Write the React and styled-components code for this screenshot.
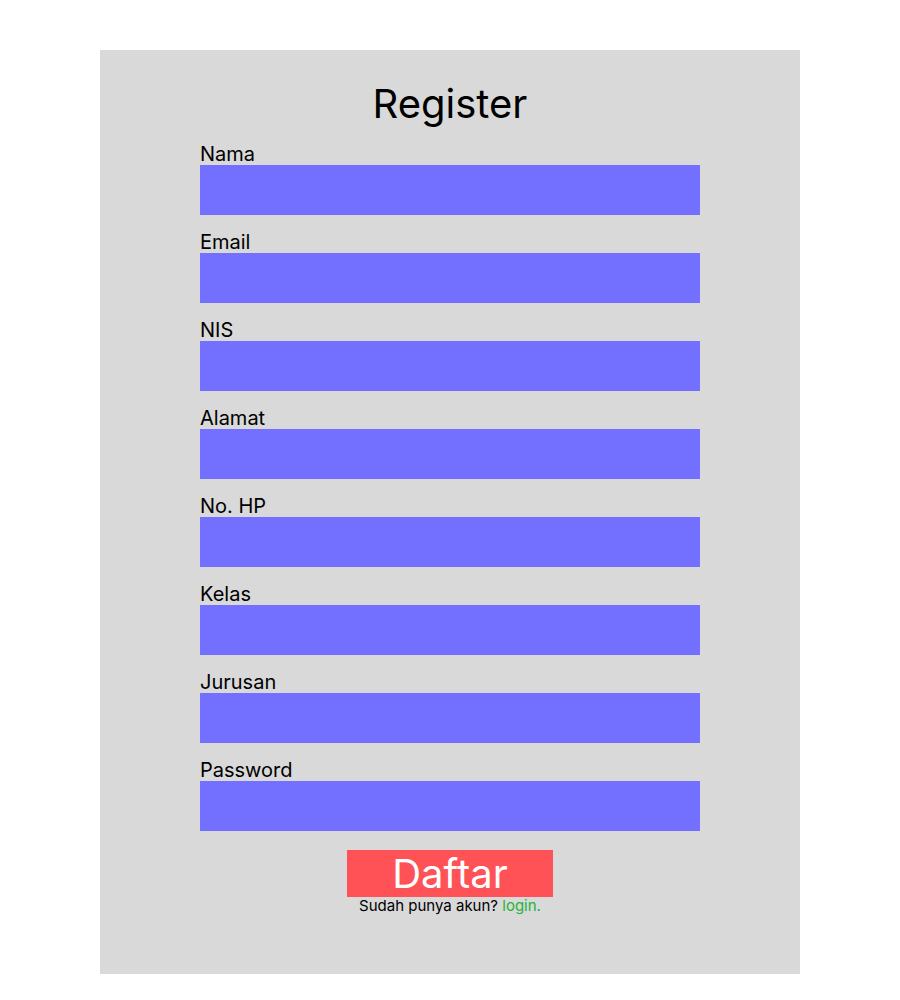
import React from "react"
import styled, { createGlobalStyle } from "styled-components"

const GlobalStyle = createGlobalStyle`
  body {
    margin: 0;
    background: #ffffff;
    font-family: Inter, "Noto Sans", sans-serif;
  }
`

const Card = styled.div`
  width: 700px;
  height: 924px;
  margin: 50px auto 0;
  padding-top: 30px;
  box-sizing: border-box;
  background-color: #d9d9d9;
  display: flex;
  flex-direction: column;
  align-items: center;
`

const Title = styled.h1`
  margin: 0 0 13px;
  font-size: 40px;
  font-weight: 400;
  line-height: 48px;
  color: #000;
`

const Form = styled.form`
  width: 500px;
  display: flex;
  flex-direction: column;
  gap: 14px;
`

const Field = styled.div`
  display: flex;
  flex-direction: column;
`

const Label = styled.label`
  padding-top: 2px;
  font-size: 20px;
  line-height: 22px;
  color: #000;
`

const Input = styled.input`
  height: 50px;
  border: none;
  padding: 0 10px;
  box-sizing: border-box;
  background-color: #7370ff;
  font-family: inherit;
  font-size: 18px;
  color: #fff;
  outline: none;
`

const Actions = styled.div`
  margin-top: 5px;
  display: flex;
  flex-direction: column;
  align-items: center;
`

const Button = styled.button`
  width: 206px;
  height: 47px;
  border: none;
  padding: 0;
  background-color: #ff5257;
  color: #fff;
  font-family: inherit;
  font-size: 40px;
  line-height: 47px;
  cursor: pointer;
`

const Footer = styled.p`
  margin: 0;
  font-size: 15px;
  line-height: 18px;
  color: #000;

  a {
    color: #22b535;
    text-decoration: none;
  }
`

const fields = ["Nama", "Email", "NIS", "Alamat", "No. HP", "Kelas", "Jurusan", "Password"]

export default function App() {
  return (
    <>
      <GlobalStyle />
      <Card>
        <Title>Register</Title>
        <Form onSubmit={(e) => e.preventDefault()}>
          {fields.map((name) => (
            <Field key={name}>
              <Label>{name}</Label>
              <Input type={name === "Password" ? "password" : "text"} />
            </Field>
          ))}
          <Actions>
            <Button type="submit">Daftar</Button>
            <Footer>
              Sudah punya akun? <a href="#">login.</a>
            </Footer>
          </Actions>
        </Form>
      </Card>
    </>
  )
}
